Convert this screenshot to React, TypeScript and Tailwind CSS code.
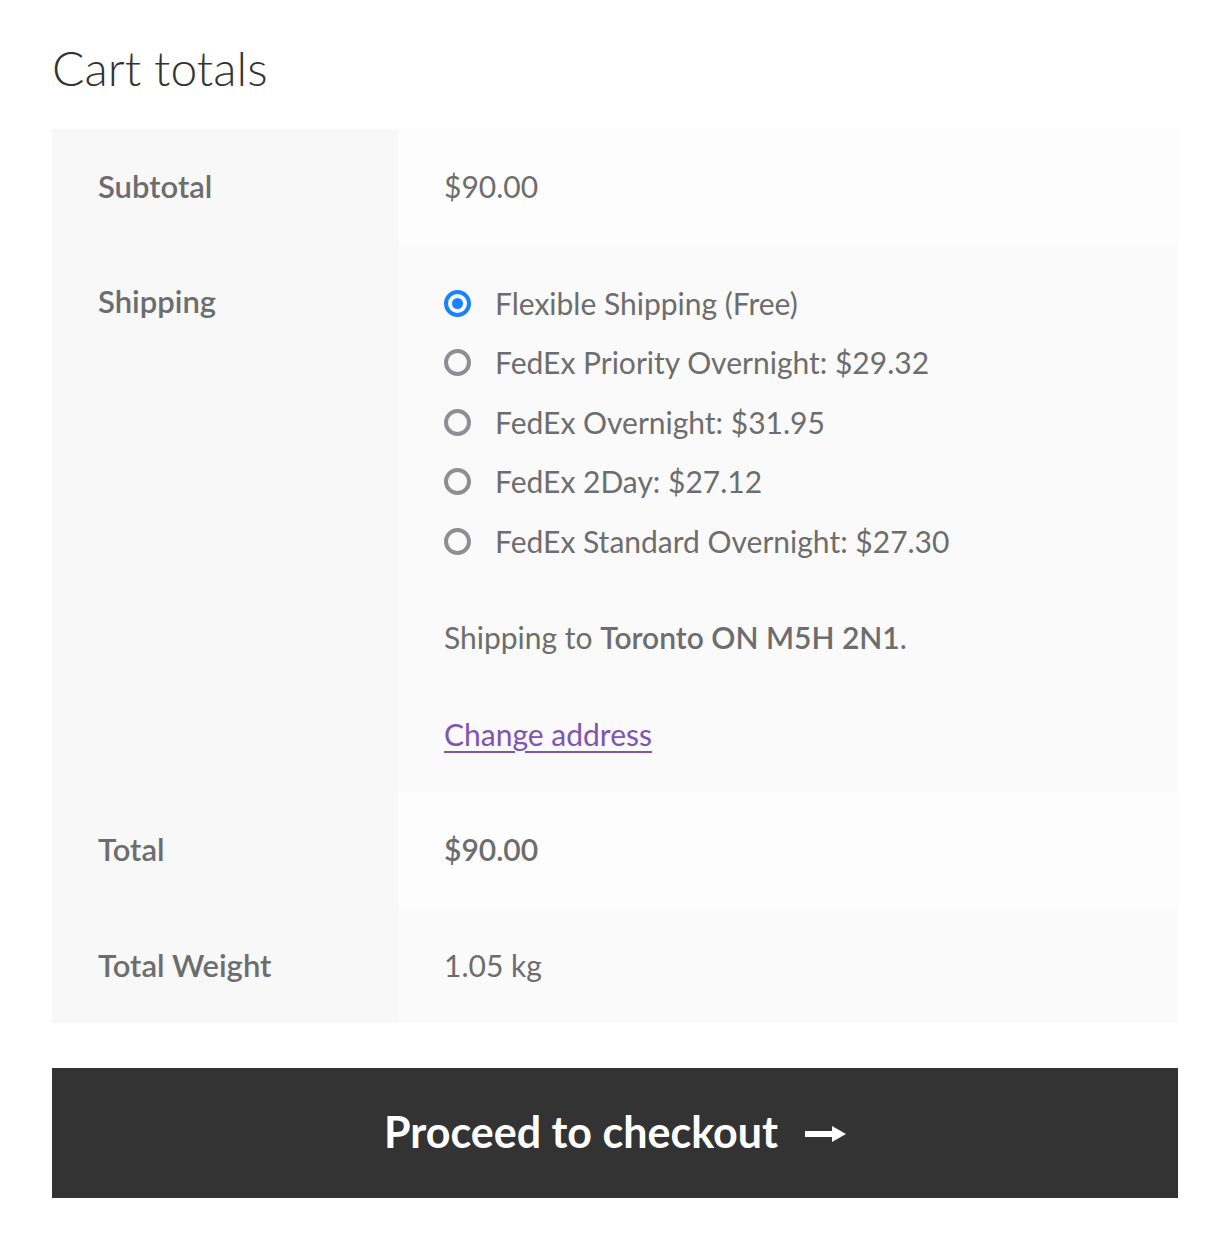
import React from 'react'

// Cart totals block (storefront-style)

const shippingOptions = [
  { id: 'flexible', label: 'Flexible Shipping (Free)', checked: true },
  { id: 'priority', label: 'FedEx Priority Overnight: $29.32', checked: false },
  { id: 'overnight', label: 'FedEx Overnight: $31.95', checked: false },
  { id: '2day', label: 'FedEx 2Day: $27.12', checked: false },
  { id: 'standard', label: 'FedEx Standard Overnight: $27.30', checked: false },
]

const Radio = ({ checked }: { checked: boolean }) =>
  checked ? (
    <span className="w-[27px] h-[27px] rounded-full border-[4px] border-[#1a82fb] flex items-center justify-center shrink-0">
      <span className="w-[11px] h-[11px] rounded-full bg-[#1a82fb]" />
    </span>
  ) : (
    <span className="w-[27px] h-[27px] rounded-full border-[4px] border-[#8e8e93] shrink-0" />
  )

const Row = ({ label, children, even }: { label: string; children: React.ReactNode; even?: boolean }) => (
  <div className="grid grid-cols-[346px_1fr]">
    <div className="bg-[#f8f8f8] px-[46px] py-[32px] leading-[51px] font-semibold text-[31px]">{label}</div>
    <div className={even ? 'bg-[#fafafa] px-[46px] py-[32px] leading-[51px]' : 'bg-[#fdfdfd] px-[46px] py-[32px] leading-[51px]'}>
      {children}
    </div>
  </div>
)

export default function App() {
  return (
    <div className="w-[1230px] h-[1246px] bg-white px-[52px] pt-[38px] text-[#6d6d6d] text-[30px] font-['Lato',sans-serif]">
      <h2 className="text-[48px] leading-[60px] font-light text-[#333333] mb-[31px]">Cart totals</h2>

      <div className="flex flex-col">
        <Row label="Subtotal">$90.00</Row>

        <Row label="Shipping" even>
          <ul className="flex flex-col gap-[5.5px]">
            {shippingOptions.map(opt => (
              <li key={opt.id} className="h-[54px] flex items-center gap-[24px]">
                <Radio checked={opt.checked} />
                <span>{opt.label}</span>
              </li>
            ))}
          </ul>
          <p className="mt-[43.5px]">
            Shipping to <strong className="font-semibold">Toronto ON M5H 2N1</strong>.
          </p>
          <p className="mt-[46px]">
            <a href="#" className="text-[#7f54b3] underline underline-offset-[5px] decoration-[2px]">Change address</a>
          </p>
        </Row>

        <div className="grid grid-cols-[346px_1fr]">
          <div className="bg-[#f8f8f8] px-[46px] pt-[32px] pb-[33px] leading-[51px] font-semibold text-[31px]">Total</div>
          <div className="bg-[#fdfdfd] px-[46px] pt-[32px] pb-[33px] leading-[51px] font-semibold">$90.00</div>
        </div>

        <Row label="Total Weight" even>1.05 kg</Row>
      </div>

      <button className="mt-[45px] w-full h-[130px] bg-[#333333] text-white flex items-center justify-center gap-[27px] text-[43px] font-bold">
        <span>Proceed to checkout</span>
        <svg width="41" height="16" viewBox="0 0 41 16" className="mt-[2px]">
          <rect x="0" y="5" width="30" height="6" fill="white" />
          <path d="M27 0 L41 8 L27 16 Z" fill="white" />
        </svg>
      </button>
    </div>
  )
}
